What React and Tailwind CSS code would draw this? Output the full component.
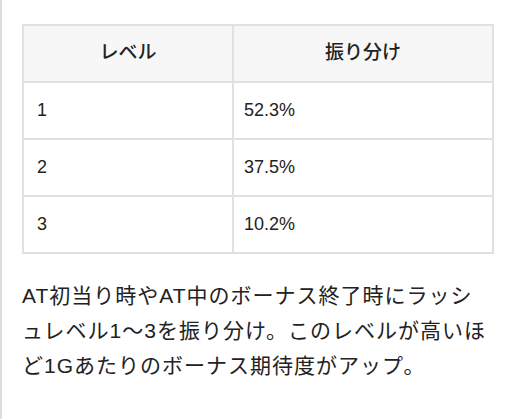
const rows = [
  { level: "1", rate: "52.3%" },
  { level: "2", rate: "37.5%" },
  { level: "3", rate: "10.2%" },
];

export default function App() {
  return (
    <div
      className="min-h-screen bg-white border-l-2 border-[#dedede] pl-[20px] pr-[18px] pt-[24px] text-[#222]"
      style={{ fontFamily: '"Liberation Sans", "Noto Sans CJK JP", sans-serif' }}
    >
      <table className="w-full border-collapse border-2 border-[#e1e1e1] text-[18px]">
        <thead>
          <tr className="bg-[#f7f7f7]">
            <th className="w-[210px] h-[57px] border-2 border-[#e1e1e1] text-[19px] font-medium text-center">レベル</th>
            <th className="h-[57px] border-2 border-[#e1e1e1] text-[19px] font-medium text-center">振り分け</th>
          </tr>
        </thead>
        <tbody>
          {rows.map((r) => (
            <tr key={r.level}>
              <td className="h-[57px] border-2 border-[#e1e1e1] px-[13px]">{r.level}</td>
              <td className="h-[57px] border-2 border-[#e1e1e1] px-[10px]">{r.rate}</td>
            </tr>
          ))}
        </tbody>
      </table>
      <p className="mt-[24px] text-[21px] leading-[35px] tracking-[1px]">
        AT初当り時やAT中のボーナス終了時にラッシュレベル1〜3を振り分け。このレベルが高いほど1Gあたりのボーナス期待度がアップ。
      </p>
    </div>
  );
}
